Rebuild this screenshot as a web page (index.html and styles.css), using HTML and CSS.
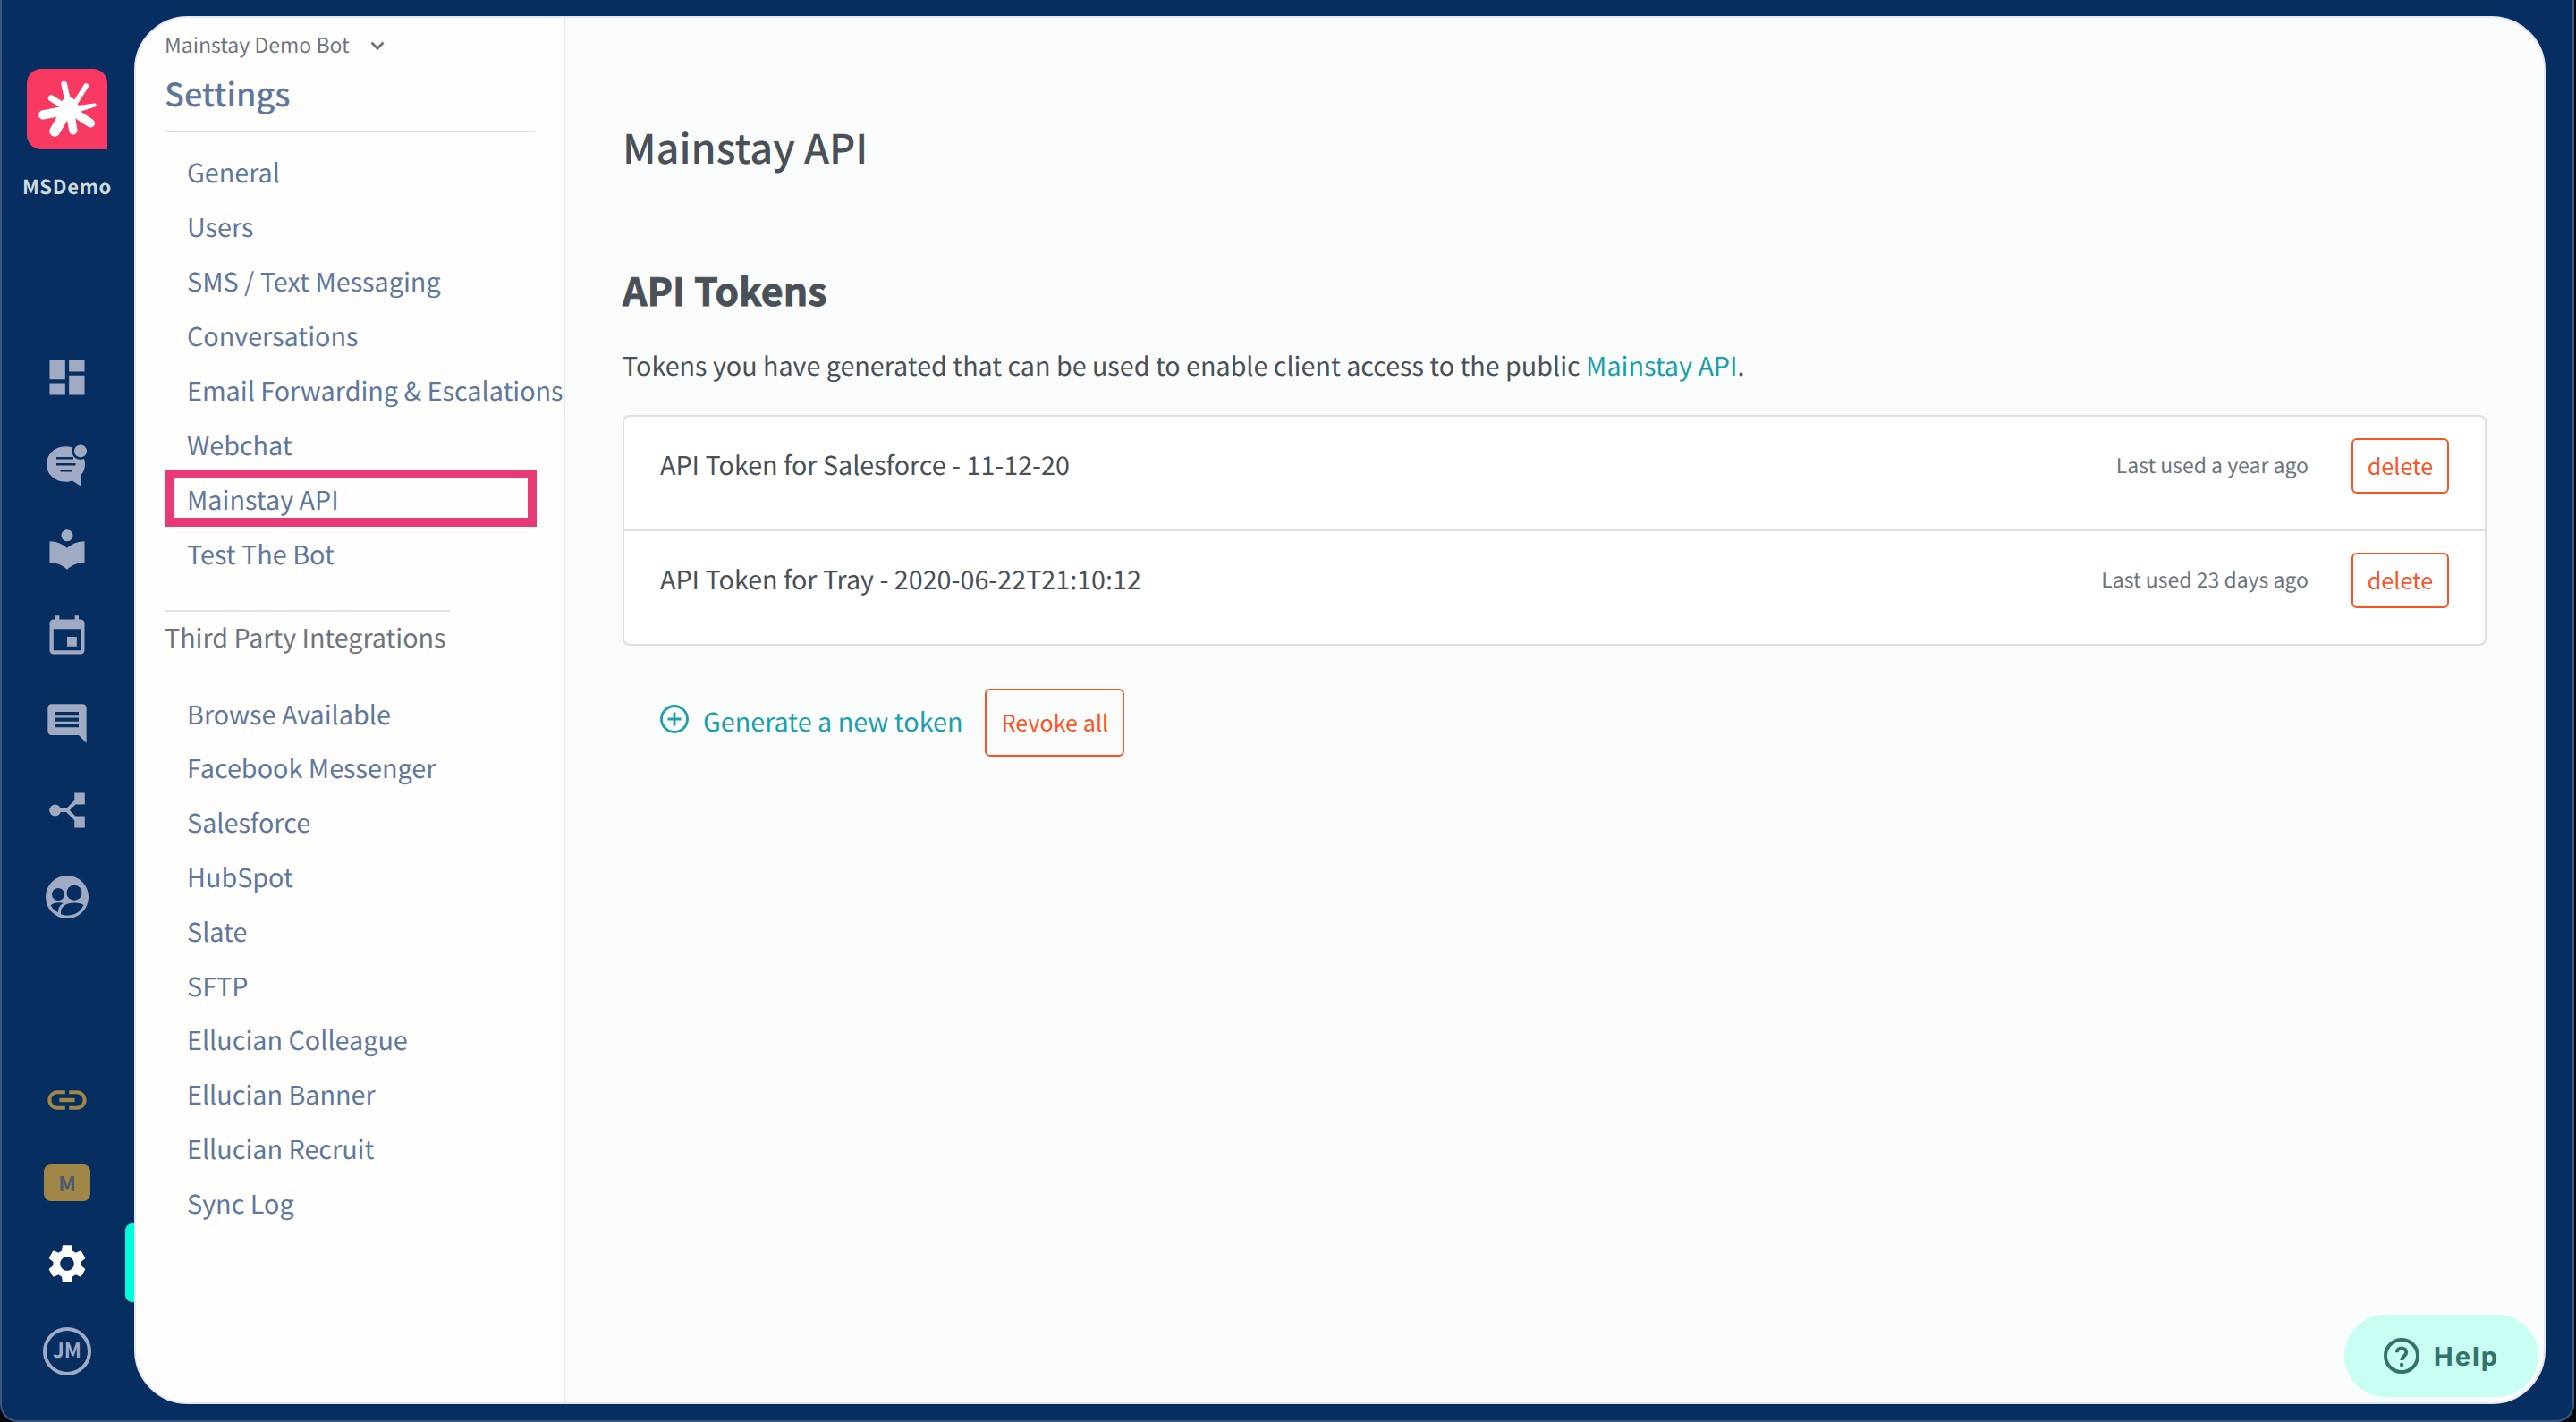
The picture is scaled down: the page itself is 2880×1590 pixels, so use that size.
FILE: index.html
```html
<!DOCTYPE html>
<html lang="en">
<head>
  <meta charset="UTF-8">
  <meta name="viewport" content="width=device-width, initial-scale=1.0">
  <title>Mainstay API | Settings</title>
  <link rel="stylesheet" href="styles.css">
</head>
<body>
  <div class="window">

    <!-- Icon rail -->
    <nav class="rail">
      <div class="logo">
        <svg viewBox="0 0 90 90" fill="none" stroke="#fff" stroke-linecap="round">
          <path d="M41.7 17L48 46" stroke-width="6.6"/>
          <path d="M66.3 19L48 48" stroke-width="5.6"/>
          <path d="M71.2 60.8L49 46" stroke-width="9.6"/>
          <path d="M51.8 68.8L48 46" stroke-width="9.4"/>
          <path d="M31.2 69.8L46 44" stroke-width="12"/>
          <path d="M18.3 51.4L46 46" stroke-width="10.4"/>
          <path d="M27.3 32.8L48 46" stroke-width="7"/>
          <path d="M75.5 38.4L50 42V51L76 42.4A2 2 0 0 0 75.5 38.4Z" fill="#fff" stroke="none"/>
          <path d="M43.5 30L50.5 32.5L54 35L58 41L59 49L56 55L49 57L42 57L35 48L36 41Z" fill="#fff" stroke="none"/>
        </svg>
      </div>
      <div class="org">MSDemo</div>

      <div class="rail-main">
        <svg viewBox="0 0 24 24"><path d="M3 13h8V3H3v10zm0 8h8v-6H3v6zm10 0h8V11h-8v10zm0-18v6h8V3h-8z"/></svg>
        <svg viewBox="0 0 52 52">
          <path d="M24.3 6.3C12 6.3 3 15 3 26s9 19.7 21.3 19.7c3 0 5.2-.4 7.5-1.3L41.3 50.500V38.500C44.500 35 46 31 46 26c0-11-9.500-19.700-21.700-19.700z"/>
          <g class="cut"><circle cx="41" cy="11.400" r="9.600"/><path d="M14 18h19v2.600H14zM14 25h21.500v2.500H14zM18.500 32h12.500v2.500H18.500z"/></g>
          <circle cx="41" cy="11.400" r="7"/>
        </svg>
        <svg viewBox="0 1 24 24"><path d="M12 11.550C9.640 9.350 6.480 8 3 8v11c3.480 0 6.640 1.350 9 3.550 2.360-2.190 5.520-3.550 9-3.550V8c-3.480 0-6.640 1.350-9 3.550zM12 8c1.660 0 3-1.340 3-3s-1.340-3-3-3-3 1.340-3 3 1.340 3 3 3z"/></svg>
        <svg viewBox="0 0 24 24"><path d="M17 12h-5v5h5v-5zM16 1v2H8V1H6v2H5c-1.110 0-1.990.9-1.990 2L3 19c0 1.100.89 2 2 2h14c1.100 0 2-.9 2-2V5c0-1.100-.9-2-2-2h-1V1h-2zm3 18H5V8h14v11z"/></svg>
        <svg viewBox="0 0 24 24"><path d="M21.990 4c0-1.100-.89-2-1.990-2H4c-1.100 0-2 .9-2 2v12c0 1.100.9 2 2 2h14l4 4-.01-18zM18 14H6v-2h12v2zm0-3H6V9h12v2zm0-3H6V6h12v2z"/></svg>
        <svg viewBox="0 0 52 52">
          <circle cx="12.700" cy="26" r="6.500"/>
          <path d="M34.300 6.500h11.500v13H34.300zM34.300 32.500h11.500v13H34.300z"/>
          <path class="line" d="M12 26h14l13-13M26 26l13 13"/>
        </svg>
        <svg viewBox="0 0 52 52">
          <circle cx="26" cy="26" r="24"/>
          <g class="cut">
            <circle cx="16" cy="23" r="7"/>
            <circle cx="34" cy="21.200" r="8.500"/>
            <path d="M19 42.500c0-6 7-10 15-10 5 0 9 1.200 10.300 2.600C41.500 42 35 46.600 26 46.600c-3 0-5-.5-7-1.400z"/>
            <path d="M7.800 35.200c2.500-3 9-3.700 14-2.500-3.500 2-5.800 5-5.800 10.500-3.800-1.700-6.600-4.500-8.200-8z"/>
          </g>
        </svg>
      </div>

      <div class="rail-bottom">
        <svg class="gold" viewBox="0 0 24 24"><path d="M3.900 12c0-1.710 1.390-3.100 3.100-3.100h4V7H7c-2.760 0-5 2.240-5 5s2.240 5 5 5h4v-1.900H7c-1.710 0-3.100-1.390-3.100-3.100zM8 13h8v-2H8v2zm9-6h-4v1.900h4c1.710 0 3.100 1.390 3.100 3.100s-1.390 3.100-3.100 3.100h-4V17h4c2.760 0 5-2.240 5-5s-2.240-5-5-5z"/></svg>
        <div class="badge">M</div>
        <div class="current">
          <svg viewBox="0 0 24 24"><path d="M19.140 12.940c.04-.3.060-.61.060-.94 0-.32-.02-.64-.07-.94l2.030-1.580c.18-.14.230-.41.120-.61l-1.920-3.320c-.12-.22-.37-.29-.59-.22l-2.390.96c-.5-.38-1.030-.7-1.620-.94l-.36-2.540c-.04-.24-.24-.41-.48-.41h-3.840c-.24 0-.43.17-.47.41l-.36 2.540c-.59.24-1.130.57-1.620.94l-2.390-.96c-.22-.08-.47 0-.59.22L2.740 8.870c-.12.21-.08.47.12.61l2.030 1.580c-.05.3-.09.63-.09.94s.02.64.07.94l-2.030 1.580c-.18.14-.23.41-.12.61l1.920 3.320c.12.22.37.29.59.22l2.390-.96c.5.38 1.030.7 1.620.94l.36 2.540c.05.24.24.41.48.41h3.840c.24 0 .44-.17.47-.41l.36-2.540c.59-.24 1.130-.56 1.620-.94l2.390.96c.22.08.47 0 .59-.22l1.920-3.320c.12-.22.070-.47-.12-.61l-2.010-1.580zM12 15.600c-1.980 0-3.600-1.620-3.600-3.600s1.620-3.600 3.600-3.600 3.600 1.620 3.600 3.600-1.620 3.600-3.600 3.600z"/></svg>
        </div>
        <div class="avatar">JM</div>
      </div>
    </nav>

    <div class="panel">
      <aside class="sidebar">
        <div class="bot">Mainstay Demo Bot
          <svg viewBox="0 0 16 12"><path d="M1.500 2.500L8 9.300l6.500-6.800"/></svg>
        </div>
        <h2>Settings</h2>
        <ul class="menu">
          <li>General</li>
          <li>Users</li>
          <li>SMS / Text Messaging</li>
          <li>Conversations</li>
          <li>Email Forwarding &amp; Escalations</li>
          <li>Webchat</li>
          <li class="selected">Mainstay API</li>
          <li>Test The Bot</li>
        </ul>
        <h3>Third Party Integrations</h3>
        <ul class="menu integrations">
          <li>Browse Available</li>
          <li>Facebook Messenger</li>
          <li>Salesforce</li>
          <li>HubSpot</li>
          <li>Slate</li>
          <li>SFTP</li>
          <li>Ellucian Colleague</li>
          <li>Ellucian Banner</li>
          <li>Ellucian Recruit</li>
          <li>Sync Log</li>
        </ul>
      </aside>

      <main>
        <h1>Mainstay API</h1>
        <h2>API Tokens</h2>
        <p>Tokens you have generated that can be used to enable client access to the public <a>Mainstay API</a>.</p>

        <div class="tokens">
          <div class="token">
            <span class="name">API Token for Salesforce - 11-12-20</span>
            <span class="used">Last used a year ago</span>
            <button>delete</button>
          </div>
          <div class="token">
            <span class="name">API Token for Tray - 2020-06-22T21:10:12</span>
            <span class="used">Last used 23 days ago</span>
            <button>delete</button>
          </div>
        </div>

        <div class="actions">
          <svg viewBox="0 0 32 32"><circle cx="16" cy="16" r="14.500"/><path d="M16 8.500v15M8.500 16h15"/></svg>
          <a>Generate a new token</a>
          <button>Revoke all</button>
        </div>
      </main>

      <div class="help">
        <svg viewBox="0 0 40 40"><circle cx="20" cy="20" r="18"/><path d="M14.800 16.200c0-3 2.200-4.700 5.200-4.700s5.300 1.700 5.300 4.600c0 4.200-5 4.200-5 9"/><circle class="dot" cx="20.100" cy="30" r="2.200"/></svg>
        Help
      </div>
    </div>
  </div>
</body>
</html>
```
FILE: styles.css
```css
*, *::after {
  box-sizing: border-box;
}
body {
  margin: 0;
  background: #05070d;
  font-family: "Noto Sans CJK SC", "Noto Sans", sans-serif;
  font-size: 28.75px;
  color: #495057;
  text-rendering: geometricPrecision;
}
h1, h2, h3, p, ul {
  margin: 0;
  padding: 0;
}
.window {
  display: flex;
  width: 2878px;
  height: 1590px;
  padding: 18px 30px 18px 0;
  background: #062e60;
  border: 2px solid #3c5680;
  border-top: none;
  border-radius: 0 0 20px 20px;
}

/* rail */
.rail {
  width: 148px;
  margin-top: -18px;
  padding: 77px 2px 0 0;
  display: flex;
  flex-direction: column;
  align-items: center;
  flex-shrink: 0;
}
.logo {
  width: 90px;
  height: 90px;
  background: #f83962;
  border-radius: 16px 16px 0 16px;
}
.logo svg {
  display: block;
}
.org {
  margin-top: 26px;
  font-size: 22px;
  font-weight: 700;
  line-height: 30px;
  letter-spacing: 0.7px;
  color: #d0dadd;
}
.rail-main {
  margin-top: 173px;
  display: flex;
  flex-direction: column;
  gap: 44.8px;
}
.rail-main svg, .rail-bottom svg {
  display: block;
  width: 52px;
  height: 52px;
  fill: #a0abc3;
}
.rail-main .cut {
  fill: #062e60;
}
.rail-main .line {
  fill: none;
  stroke: #a0abc3;
  stroke-width: 4;
}
.rail-bottom {
  width: 100%;
  margin-top: 175px;
  display: flex;
  flex-direction: column;
  align-items: center;
}
.rail-bottom .gold {
  fill: #a08647;
}
.badge {
  width: 52px;
  height: 41px;
  margin-top: 46px;
  border-radius: 8px;
  background: #a08647;
  color: #4b5a70;
  font-size: 23px;
  font-weight: 700;
  line-height: 40px;
  text-align: center;
}
.current {
  position: relative;
  width: 100%;
  margin-top: 44px;
  display: flex;
  justify-content: center;
}
.rail-bottom .current svg {
  fill: #fff;
}
.current::after {
  content: "";
  position: absolute;
  right: -2px;
  top: -19px;
  width: 10px;
  height: 88px;
  border-radius: 8px 0 0 8px;
  background: #00ffdc;
}
.avatar {
  width: 54px;
  height: 54px;
  margin-top: 45px;
  border: 4px solid #a0abc3;
  border-radius: 50%;
  color: #a0abc3;
  font-size: 22.5px;
  font-weight: 700;
  line-height: 43px;
  text-align: center;
}

/* panel */
.panel {
  position: relative;
  flex: 1;
  display: flex;
  background: #fafcfb;
  border: 2px solid #e4e7f0;
  border-radius: 60px;
  overflow: hidden;
}
.sidebar {
  width: 480px;
  flex-shrink: 0;
  padding: 12px 0 0 32px;
  background: #fffefd;
  border-right: 2px solid #e3e6ea;
  color: #5e789c;
  white-space: nowrap;
}
.bot {
  display: flex;
  align-items: center;
  gap: 23px;
  font-size: 23px;
  line-height: 34px;
  color: #6c757d;
}
.bot svg {
  width: 16px;
  height: 12px;
  margin-top: 3px;
  fill: none;
  stroke: #6c757d;
  stroke-width: 2.8;
}
.sidebar h2 {
  width: 414px;
  margin-top: 14px;
  padding-bottom: 18px;
  font-size: 36px;
  font-weight: 500;
  line-height: 48px;
  border-bottom: 2px solid #dae0e5;
}
.menu {
  list-style: none;
  margin-top: 15px;
  padding-left: 25px;
}
.menu li {
  line-height: 60.95px;
}
.menu .selected {
  position: relative;
}
.selected::after {
  content: "";
  position: absolute;
  left: -25px;
  top: -4px;
  width: 416px;
  height: 64px;
  border: 10px solid #e83a76;
}
.sidebar h3 {
  width: 319px;
  margin-top: 31px;
  padding-top: 9px;
  border-top: 2px solid #e0e2e3;
  font-size: 28.65px;
  font-weight: 400;
  line-height: 40px;
  color: #6c757d;
}
.integrations {
  margin-top: 36px;
}
.integrations li {
  line-height: 60.8px;
}

main {
  flex: 1;
  padding: 115px 64px 0 64px;
}
h1 {
  font-size: 45.2px;
  font-weight: 500;
  line-height: 60px;
}
main h2 {
  margin-top: 99px;
  font-size: 42.9px;
  font-weight: 700;
  line-height: 60px;
  -webkit-text-stroke: 0.8px #495057;
}
main p {
  margin-top: 33px;
  font-size: 28.69px;
  line-height: 44px;
}
a {
  color: #1b9faa;
}
.tokens {
  margin-top: 33px;
  background: #fff;
  border: 2px solid #dedfe0;
  border-radius: 8px;
}
.token {
  display: flex;
  height: 126px;
  padding: 24px 40px 0 40px;
}
.token + .token {
  height: 128px;
  border-top: 2px solid #dedfe0;
}
.name {
  flex: 1;
  font-size: 28.7px;
  line-height: 60px;
}
.used {
  margin-right: 48px;
  font-size: 23px;
  line-height: 58px;
  color: #6c757d;
}
button {
  width: 109px;
  height: 62px;
  padding: 0 0 3px;
  background: none;
  border: 2px solid #fa5424;
  border-radius: 6px;
  font-family: inherit;
  font-size: 25.2px;
  color: #fa5424;
}
.actions {
  display: flex;
  align-items: center;
  margin-top: 48px;
  padding-left: 42px;
}
.actions svg {
  width: 32px;
  height: 32px;
  margin: -8px 16px 0 0;
  fill: none;
  stroke: #1b9faa;
  stroke-width: 2.8;
}
.actions a {
  margin-top: -3px;
}
.actions button {
  width: 156px;
  height: 76px;
  margin-left: 25px;
}

.help {
  position: absolute;
  right: 6px;
  bottom: 6px;
  width: 217px;
  height: 92px;
  padding-left: 44px;
  display: flex;
  align-items: center;
  gap: 16px;
  border-radius: 46px;
  background: #c9fef5;
  color: #32746a;
  font-family: Inter, sans-serif;
  font-size: 29px;
  font-weight: 700;
  letter-spacing: 2px;
}
.help svg {
  width: 40px;
  height: 40px;
  fill: none;
  stroke: #32746a;
  stroke-width: 4;
}
.help .dot {
  fill: #32746a;
  stroke: none;
}
```
